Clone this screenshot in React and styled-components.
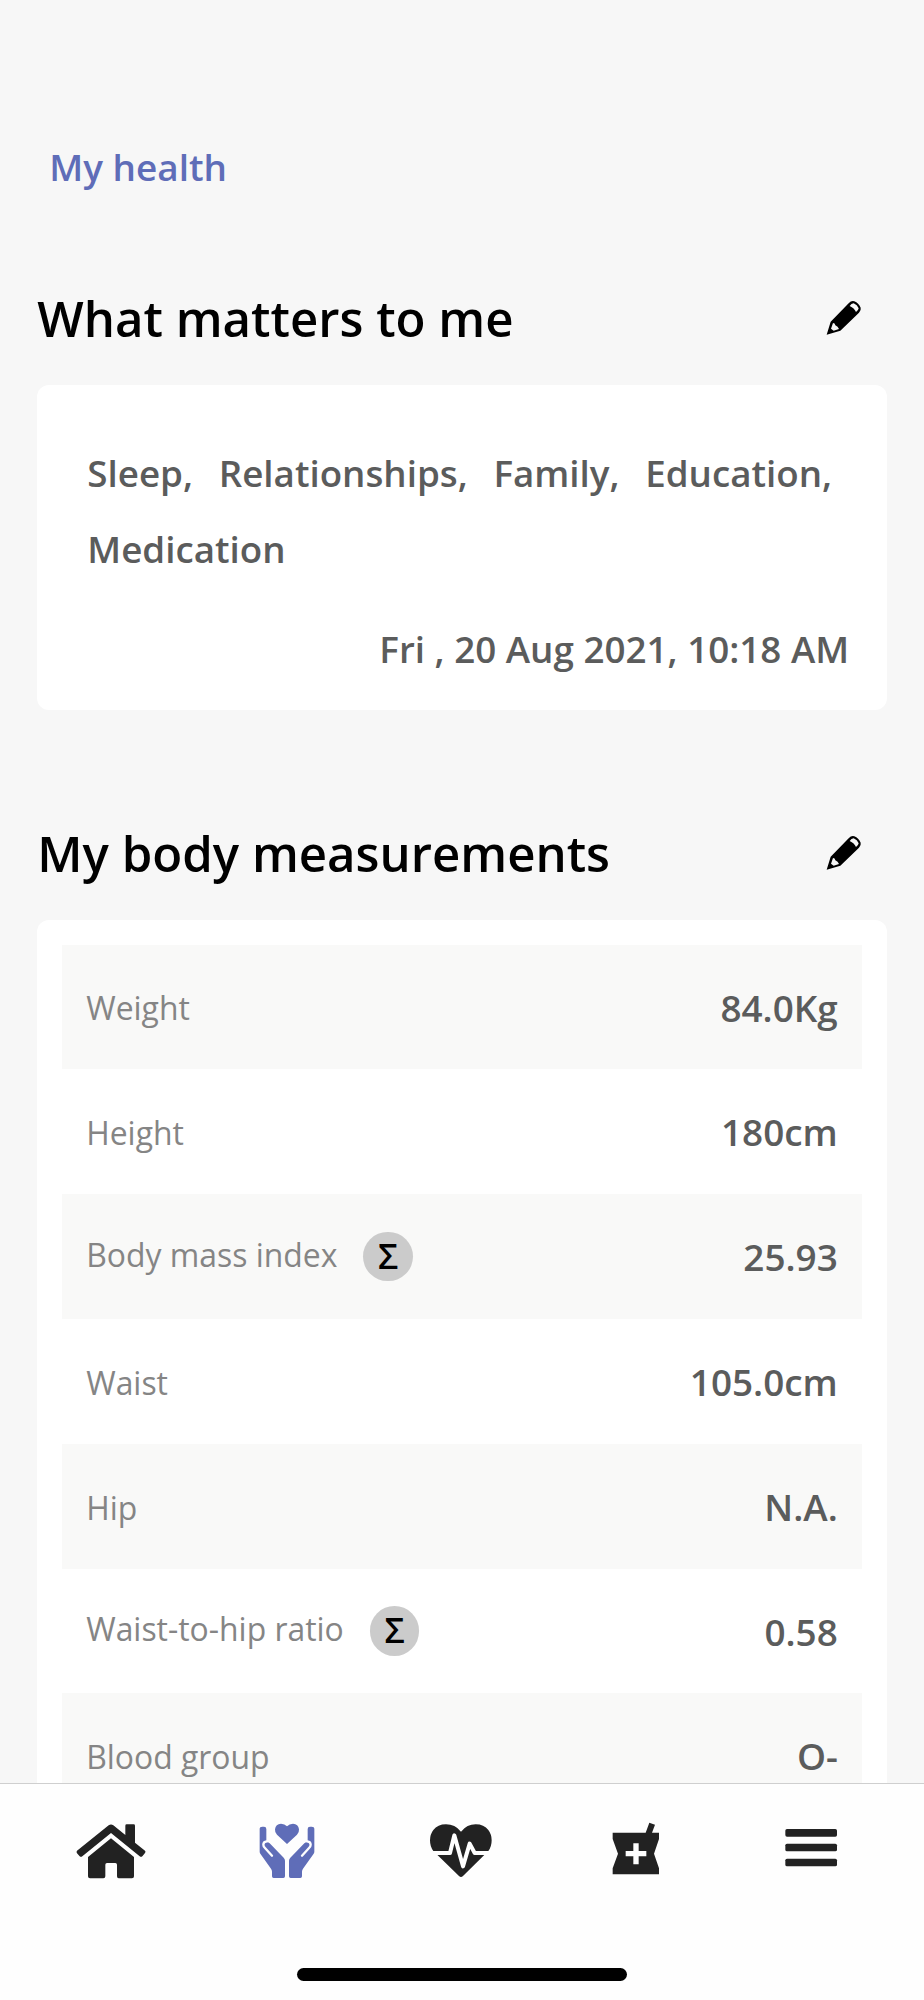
import React from "react";
import styled, { createGlobalStyle } from "styled-components";

const GlobalStyle = createGlobalStyle`
  * {
    box-sizing: border-box;
  }
  body {
    margin: 0;
    background-color: #f7f7f7;
    font-family: "Open Sans", sans-serif;
  }
`;

const Screen = styled.div`
  display: flex;
  flex-direction: column;
  width: 924px;
  height: 2000px;
  overflow: hidden;
  background-color: #f7f7f7;
`;

const Content = styled.main`
  flex: 1;
  min-height: 0;
  overflow: hidden;
  padding: 136.5px 37.3px 0;
`;

const BackLink = styled.a`
  display: block;
  padding-left: 12px;
  height: 60px;
  line-height: 60px;
  font-size: 36.9px;
  font-weight: 600;
  color: #5f6db8;
`;

const Section = styled.section`
  margin-top: ${(props) => props.gap}px;
`;

const SectionHeader = styled.header`
  display: flex;
  align-items: center;
  justify-content: space-between;
  height: 68px;
  margin-bottom: 33.3px;
  padding-right: 24px;
`;

const Title = styled.h2`
  margin: 0;
  font-size: 49.15px;
  font-weight: 600;
  line-height: 68px;
  color: #000;
`;

const Card = styled.div`
  background-color: #fff;
  border-radius: 12px;
  padding: ${(props) => props.padding};
`;

const Topics = styled.div`
  display: flex;
  flex-wrap: wrap;
  column-gap: 25.7px;
`;

const Topic = styled.span`
  font-size: 36.75px;
  font-weight: 600;
  line-height: 76px;
  color: #5b5c5c;
`;

const DateText = styled.div`
  margin-top: 24px;
  text-align: right;
  font-size: 36.8px;
  font-weight: 600;
  line-height: 76px;
  color: #5b5c5c;
`;

const Row = styled.div`
  display: flex;
  align-items: center;
  justify-content: space-between;
  height: 124.8px;
  padding: 0 24.5px;
  background-color: ${(props) => (props.$shaded ? "#f9f9f8" : "#fff")};
`;

const Label = styled.div`
  display: flex;
  align-items: center;
  gap: 26px;
  font-size: 31.9px;
  line-height: 45px;
  color: #858585;
`;

const LabelText = styled.span`
  padding-top: ${(props) => (props.$raised ? "0" : "2px")};
  padding-bottom: ${(props) => (props.$raised ? "4.5px" : "0")};
`;

const Sigma = styled.span`
  display: flex;
  align-items: center;
  justify-content: center;
  width: 49.5px;
  height: 49.5px;
  padding-bottom: 2px;
  border-radius: 50%;
  background-color: #cbcbcb;
  font-size: 35px;
  font-weight: 600;
  color: #000;
`;

const Value = styled.div`
  padding-top: 1.5px;
  font-size: 36.9px;
  font-weight: 600;
  color: #5b5c5c;
`;

const TabBar = styled.nav`
  display: flex;
  flex-direction: column;
  align-items: center;
  justify-content: space-between;
  height: 217.5px;
  padding-bottom: 19px;
  border-top: 1.5px solid #cfcfcf;
  background-color: #fefefe;
`;

const Tabs = styled.div`
  display: grid;
  grid-template-columns: repeat(5, 1fr);
  width: 875px;
  margin-right: 2px;
  padding-top: 37px;
`;

const Tab = styled.button`
  display: flex;
  align-items: center;
  justify-content: center;
  height: 60px;
  padding: 0;
  border: none;
  background: none;
  color: ${(props) => (props.$active ? "#5f6db8" : "#222")};
`;

const HomeIndicator = styled.div`
  width: 330px;
  height: 13px;
  border-radius: 7px;
  background-color: #000;
`;

const PencilIcon = () => (
  <svg width="38" height="38" viewBox="136 85 114 114">
    <path d="M141 192 L153 153 L207 98 Q215 89 224 92 Q237 97 243 111 Q245 119 238 126 L182 180 Z" fill="#000" />
    <path d="M210 106 Q215 98 222 98 Q233 102 237 113 Q236 120 229 124 Q224 112 210 106 Z" fill="#f7f7f7" />
    <path d="M160 157 Q166 157 167 164 Q175 167 178 175 L162 180 L154 174 Z" fill="#f7f7f7" />
  </svg>
);

const HomeIcon = () => (
  <svg width="72" height="60" viewBox="46 152 216 180" fill="currentColor">
    <path d="M52 241 L147 165 Q154 160 161 165 L197 194 V166 Q197 162 201 162 H222 Q226 162 226 166 V217 L256 241 Q259 244 256 248 L248 258 Q244 261 240 258 L154 188 L68 258 Q64 261 60 258 L52 249 Q49 245 52 241 Z" />
    <path d="M154 204 L223 260 V318 Q223 324 217 324 H177 Q172 324 172 318 V283 Q172 278 167 278 H142 Q137 278 137 283 V318 Q137 324 131 324 H91 Q85 324 85 318 V260 Z" />
  </svg>
);

const Hand = () => (
  <>
    <path
      d="M601 176 Q601 169 609 169 H614 Q621 169 621 176 V216 Q626 214 631 219 L673 262 Q677 266 677 271 V318 Q677 323 672 323 H643 Q638 323 638 318 V304 Q638 299 635 295 L603 250 Q601 247 601 244 Z"
      fill="currentColor"
    />
    <path
      d="M622 213 Q612 214 612 223 Q612 228 617 233 L638 256"
      fill="none"
      stroke="#fefefe"
      strokeWidth="7"
      strokeLinecap="round"
    />
  </>
);

const CareIcon = () => (
  <svg width="60" height="60" viewBox="590 152 180 180">
    <Hand />
    <g transform="translate(1366 0) scale(-1 1)">
      <Hand />
    </g>
    <path
      d="M683 221 L653 193 Q646 186 647 177 Q649 161 665 160 Q676 160 683 168 Q690 160 701 160 Q717 161 719 177 Q720 186 713 193 Z"
      fill="currentColor"
    />
  </svg>
);

const HeartPulseIcon = () => (
  <svg width="66" height="60" viewBox="85 152 198 180">
    <path
      d="M184 184 Q166 162 139 162 Q114 162 101 179 Q91 192 91 210 Q91 229 101 242 L178 317 Q184 323 190 317 L266 242 Q276 229 276 210 Q276 192 266 179 Q253 162 228 162 Q202 162 184 184 Z"
      fill="currentColor"
    />
    <path
      d="M85 248 H151 L164 195 L190 288 L210 220 L225 248 H283"
      fill="none"
      stroke="#fefefe"
      strokeWidth="12"
      strokeLinejoin="round"
    />
  </svg>
);

const MortarIcon = () => (
  <svg width="54" height="60" viewBox="628 152 162 180">
    <path
      d="M639 187 H738 L749 157 L766 163 L757 187 H778 V206 L763 250 L778 294 V312 H639 V294 L655 250 L639 206 Z"
      fill="currentColor"
    />
    <path d="M709 219 V282 M678 250 H740" stroke="#fefefe" strokeWidth="16" />
  </svg>
);

const MenuIcon = () => (
  <svg width="60" height="60" viewBox="94 152 180 180" fill="currentColor">
    <rect x="107" y="176" width="155" height="23" rx="5" />
    <rect x="107" y="220" width="155" height="23" rx="5" />
    <rect x="107" y="265" width="155" height="23" rx="5" />
  </svg>
);

const topics = ["Sleep,", "Relationships,", "Family,", "Education,", "Medication"];

const measurements = [
  { label: "Weight", value: "84.0Kg" },
  { label: "Height", value: "180cm" },
  { label: "Body mass index", value: "25.93", calculated: true },
  { label: "Waist", value: "105.0cm" },
  { label: "Hip", value: "N.A." },
  { label: "Waist-to-hip ratio", value: "0.58", calculated: true },
  { label: "Blood group", value: "O-" },
];

const tabs = [
  { name: "home", Icon: HomeIcon },
  { name: "health", Icon: CareIcon, active: true },
  { name: "vitals", Icon: HeartPulseIcon },
  { name: "medicines", Icon: MortarIcon },
  { name: "menu", Icon: MenuIcon },
];

const App = () => {
  return (
    <>
      <GlobalStyle />
      <Screen>
        <Content>
          <BackLink>My health</BackLink>

          <Section gap={87.2}>
            <SectionHeader>
              <Title>What matters to me</Title>
              <PencilIcon />
            </SectionHeader>
            <Card padding="50.4px 37.5px 22.8px 50px">
              <Topics>
                {topics.map((item) => (
                  <Topic key={item}>{item}</Topic>
                ))}
              </Topics>
              <DateText>Fri , 20 Aug 2021, 10:18 AM</DateText>
            </Card>
          </Section>

          <Section gap={108.4}>
            <SectionHeader>
              <Title>My body measurements</Title>
              <PencilIcon />
            </SectionHeader>
            <Card padding="24.7px 24.4px">
              {measurements.map((item, i) => (
                <Row key={item.label} $shaded={i % 2 === 0}>
                  <Label>
                    <LabelText $raised={item.calculated}>{item.label}</LabelText>
                    {item.calculated && <Sigma>Σ</Sigma>}
                  </Label>
                  <Value>{item.value}</Value>
                </Row>
              ))}
            </Card>
          </Section>
        </Content>

        <TabBar>
          <Tabs>
            {tabs.map(({ name, Icon, active }) => (
              <Tab key={name} $active={active}>
                <Icon />
              </Tab>
            ))}
          </Tabs>
          <HomeIndicator />
        </TabBar>
      </Screen>
    </>
  );
};

export default App;
